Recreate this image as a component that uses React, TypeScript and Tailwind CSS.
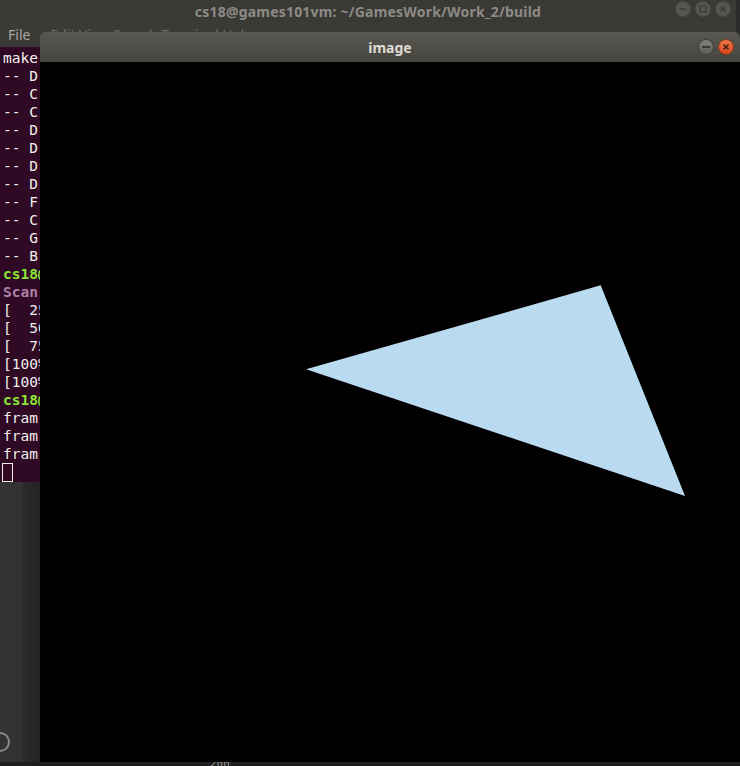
import React from "react";

const mono = { fontFamily: '"DejaVu Sans Mono", "Liberation Mono", monospace' };

type Line = { text: string; tone?: "green" | "purple" | "plain" };

const termLines: Line[] = [
  { text: "make" },
  { text: "-- D" },
  { text: "-- C" },
  { text: "-- C" },
  { text: "-- D" },
  { text: "-- D" },
  { text: "-- D" },
  { text: "-- D" },
  { text: "-- F" },
  { text: "-- C" },
  { text: "-- G" },
  { text: "-- B" },
  { text: "cs18@", tone: "green" },
  { text: "Scan", tone: "purple" },
  { text: "[  25%" },
  { text: "[  50%" },
  { text: "[  75%" },
  { text: "[100%" },
  { text: "[100%" },
  { text: "cs18@", tone: "green" },
  { text: "fram" },
  { text: "fram" },
  { text: "fram" },
];

const toneClass = {
  green: "text-[#8ae234] font-bold",
  purple: "text-[#ad7fa8] font-bold",
  plain: "text-[#eeeeec]",
};

const TitleButton = ({ kind }: { kind: "min" | "max" | "close" }) => (
  <div className="w-[16px] h-[16px] rounded-full bg-[#56554f] border border-[#4a4944] flex items-center justify-center">
    <svg width="10" height="10" viewBox="0 0 10 10">
      {kind === "min" && <path d="M2 5h6" stroke="#3c3b37" strokeWidth="1.4" />}
      {kind === "max" && <rect x="2" y="2" width="6" height="6" fill="none" stroke="#3c3b37" strokeWidth="1.3" />}
      {kind === "close" && <path d="M2.5 2.5l5 5M7.5 2.5l-5 5" stroke="#3c3b37" strokeWidth="1.4" />}
    </svg>
  </div>
);

const Terminal = () => (
  <div className="flex flex-col w-[736px] h-[482px] bg-[#300a24]">
    <div className="relative h-[22px] bg-[#3a3935] flex items-center justify-center">
      <span
        className="text-[14px] font-bold text-[#8c8b86] tracking-[0.2px]"
        style={{ fontFamily: '"Noto Sans", "Open Sans", sans-serif' }}
      >
        cs18@games101vm: ~/GamesWork/Work_2/build
      </span>
      <div className="absolute right-[5px] top-[1px] flex gap-[4px]">
        <TitleButton kind="min" />
        <TitleButton kind="max" />
        <TitleButton kind="close" />
      </div>
    </div>
    <div className="h-[25px] bg-[#3b3a36] flex items-center pl-[8px] gap-[20px]">
      <span
        className="text-[14px] text-[#a9a8a2]"
        style={{ fontFamily: '"Noto Sans", "Open Sans", sans-serif' }}
      >
        File
      </span>
      <span className="text-[14px] text-[#6d6c67]" style={{ fontFamily: '"Noto Sans", sans-serif' }}>
        Edit View Search Terminal Help
      </span>
    </div>
    <div className="flex flex-col pt-[2px] pl-[3px] text-[14.5px] leading-[18px]" style={mono}>
      {termLines.map((l, i) => (
        <div key={i} className={`whitespace-pre ${toneClass[l.tone ?? "plain"]}`}>
          {l.text}
        </div>
      ))}
      <div className="w-[11px] h-[19px] -ml-[1px] border-[1.5px] border-[#eeeeec]" />
    </div>
  </div>
);

const ImageWindow = () => (
  <div className="absolute left-[40px] top-[32px] w-[700px] flex flex-col">
    <div className="relative h-[30px] rounded-t-[6px] bg-gradient-to-b from-[#5a5852] to-[#46443f] flex items-center justify-center">
      <span
        className="text-[14px] font-bold text-[#dfdbd2]"
        style={{ fontFamily: '"Noto Sans", "Open Sans", sans-serif' }}
      >
        image
      </span>
      <div className="absolute right-[6px] top-[7px] flex gap-[4px]">
        <div className="w-[16px] h-[16px] rounded-full bg-gradient-to-b from-[#85837e] to-[#5e5c57] border border-[#3e3d39] flex items-center justify-center">
          <div className="w-[8px] h-[1.5px] bg-[#3a3935]" />
        </div>
        <div className="w-[16px] h-[16px] rounded-full bg-gradient-to-b from-[#f07746] to-[#d9461d] border border-[#8a3417] flex items-center justify-center">
          <svg width="8" height="8" viewBox="0 0 8 8">
            <path d="M1.5 1.5l5 5M6.5 1.5l-5 5" stroke="#3a1a0d" strokeWidth="1.3" />
          </svg>
        </div>
      </div>
    </div>
    <div className="w-[700px] h-[700px] bg-black">
      <svg width="700" height="700" viewBox="0 0 700 700">
        <polygon points="266,307.3 560.7,223.3 645,434" fill="#b9daef" />
      </svg>
    </div>
  </div>
);

export default function App() {
  return (
    <div className="relative w-[740px] h-[766px] overflow-hidden bg-[#2b2b2b]">
      <Terminal />
      <div className="flex h-[280px]">
        <div className="w-[22px] bg-[#333333] flex flex-col justify-end pb-[10px]">
          <div className="-ml-[10px] w-[20px] h-[20px] rounded-full border-2 border-[#8a8a8a]" />
        </div>
        <div className="w-[18px] bg-gradient-to-r from-[#2c2c2c] to-[#232323]" />
      </div>
      <div className="h-[4px] bg-[#1e1e1e] flex items-end">
        <span className="ml-[210px] text-[11px] leading-[4px] text-[#9a9a9a]" style={mono}>
          200
        </span>
      </div>
      <ImageWindow />
    </div>
  );
}
